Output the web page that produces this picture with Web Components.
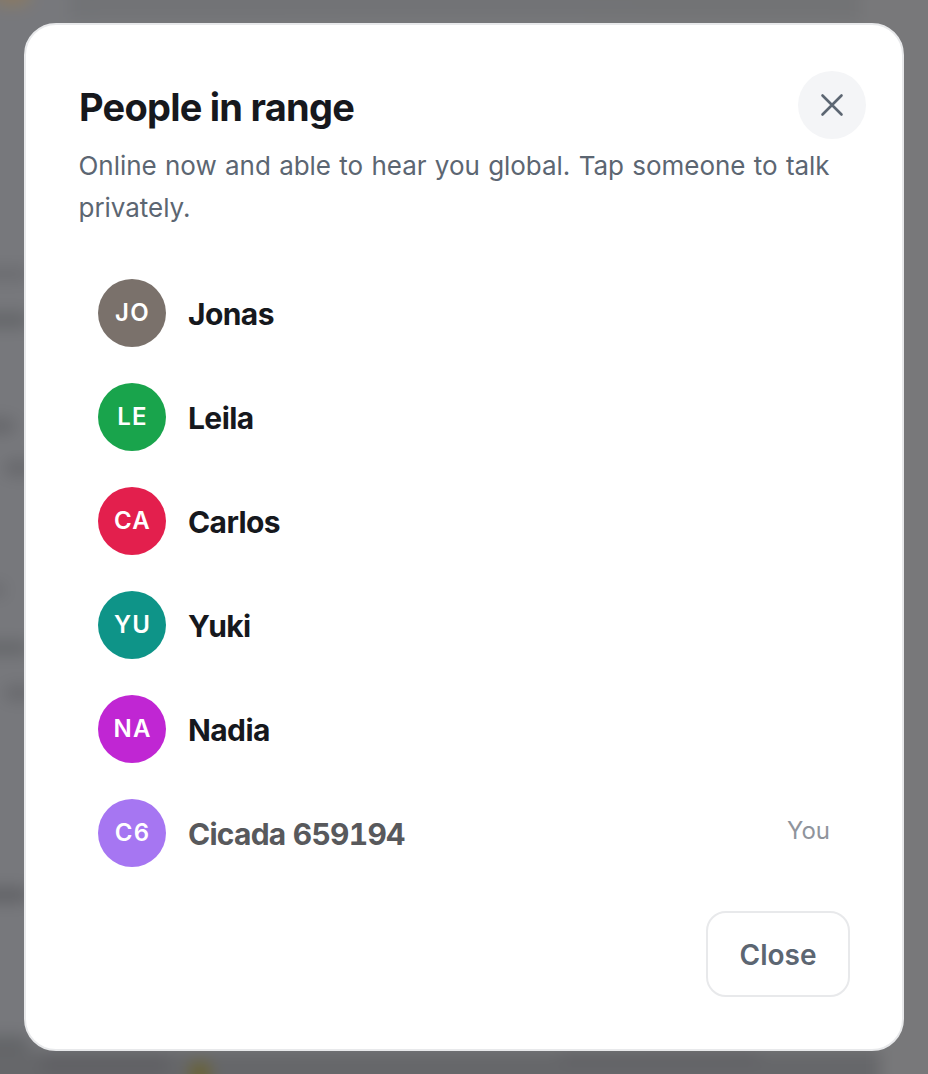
<!DOCTYPE html>
<html><head><meta charset="utf-8"><style>
html,body{margin:0;height:1074px;overflow:hidden;background:#77787b;font-family:Inter,"Liberation Sans",sans-serif}
</style></head><body>
<template id="t-backdrop"><style>
:host{display:block;position:relative;width:928px;height:1074px;overflow:hidden;box-sizing:border-box;padding:23px 24px;background:#77787b}
.blur{position:absolute;inset:-20px;filter:blur(8px);background:linear-gradient(90deg,#77787c,#797a7c 50%,#78787a)}
.b{position:absolute;background:#55565a;border-radius:10px;opacity:.6}
.top{position:absolute;left:14px;top:0;width:36px;height:26px;background:#8d7a5e;border-radius:8px;opacity:.8}
.y{position:absolute;left:210px;top:1082px;width:20px;height:24px;background:#6a6230;border-radius:8px}
.band-t{position:absolute;left:90px;top:0;width:790px;height:40px;background:#6f7073;opacity:.7}
.band-b{position:absolute;left:0;top:1070px;width:900px;height:40px;background:#66676a}
.modal{position:relative}
</style><div class="blur">
<span class="band-t"></span><span class="band-b"></span>
<span class="top"></span><span class="y"></span>
<span class="b" style="left:0;top:288px;width:50px;height:12px;opacity:.4"></span>
<span class="b" style="left:0;top:333px;width:50px;height:14px"></span>
<span class="b" style="left:0;top:438px;width:36px;height:16px;opacity:.5"></span>
<span class="b" style="left:24px;top:480px;width:30px;height:16px;opacity:.5"></span>
<span class="b" style="left:0;top:604px;width:26px;height:12px;opacity:.4"></span>
<span class="b" style="left:0;top:662px;width:50px;height:12px;opacity:.6"></span>
<span class="b" style="left:24px;top:706px;width:30px;height:14px;opacity:.5"></span>
<span class="b" style="left:0;top:908px;width:50px;height:14px;opacity:.7"></span>
<span class="b" style="left:0;top:1056px;width:50px;height:14px;opacity:.6"></span>
<span class="b" style="left:60px;top:1076px;width:130px;height:16px;opacity:.4"></span>
<span class="b" style="left:580px;top:1072px;width:200px;height:10px;opacity:.4"></span>
</div><div class="modal"><slot></slot></div></template>

<template id="t-dialog"><style>
:host{display:block;box-sizing:border-box;width:880px;height:1028px;background:#fff;border:2px solid #e8e9eb;border-radius:32px;padding:52px 53px 0;position:relative}
h2{margin:0;font-size:38px;line-height:60px;font-weight:700;letter-spacing:-.76px;color:#16181d;height:60px}
p{margin:0;width:770px;font-size:26px;line-height:42px;color:#5c6672;letter-spacing:-.04px;word-spacing:1.1px;margin-top:8px;margin-left:-.5px}
.list{margin-top:50px;margin-left:19px;margin-right:19px;display:flex;flex-direction:column;gap:36px}
.foot{position:absolute;right:52px;bottom:52px}
.x{position:absolute;top:46px;right:36px}
</style><h2><slot name="title"></slot></h2><p><slot name="sub"></slot></p>
<div class="x"><slot name="x"></slot></div>
<div class="list"><slot></slot></div>
<div class="foot"><slot name="foot"></slot></div></template>

<template id="t-person"><style>
:host{display:flex;align-items:center;height:68px;gap:22px;color:#16181d}
.av{flex:none;width:68px;height:68px;border-radius:50%;display:flex;align-items:center;justify-content:center;color:#fff;font-size:24px;font-weight:600;letter-spacing:1.2px;padding:0 0 2px 1px;box-sizing:border-box}
.n{flex:1;font-size:30px;font-weight:700;letter-spacing:-.6px;line-height:36px;padding-top:2px}
.t{font-size:24px;color:#8f949c;padding-bottom:5px}
:host([self]){color:#58595c}
:host([self]) .n{font-feature-settings:"tnum";letter-spacing:-.75px}
</style><div class="av"></div><div class="n"><slot></slot></div><div class="t"><slot name="tag"></slot></div></template>

<template id="t-xbtn"><style>
:host{display:flex;width:68px;height:68px;border-radius:50%;background:#f4f5f7;align-items:center;justify-content:center}
svg{width:34px;height:34px;display:block}
</style><svg viewBox="0 0 34 34" fill="none" stroke="#5c6672" stroke-width="2.6" stroke-linecap="round"><path d="M7.5 7.5L26.5 26.5M26.5 7.5L7.5 26.5"/></svg></template>

<template id="t-btn"><style>
:host{display:flex;box-sizing:border-box;width:144px;height:86px;align-items:center;justify-content:center;border:2px solid #e8e9eb;border-radius:20px;background:#fff;color:#5c6672;font-size:28px;font-weight:600;padding-top:2px}
</style><slot></slot></template>

<people-backdrop>
<people-dialog>
<span slot="title">People in range</span>
<span slot="sub">Online now and able to hear you global. Tap someone to talk privately.</span>
<x-button slot="x"></x-button>
<person-row initials="JO" color="#7a716b">Jonas</person-row>
<person-row initials="LE" color="#19a44c">Leila</person-row>
<person-row initials="CA" color="#e31f4d">Carlos</person-row>
<person-row initials="YU" color="#0e9488">Yuki</person-row>
<person-row initials="NA" color="#c026d3">Nadia</person-row>
<person-row initials="C6" color="#a676f2" self>Cicada 659194<span slot="tag">You</span></person-row>
<close-button slot="foot">Close</close-button>
</people-dialog>
</people-backdrop>
<script>
function def(name,id,init){customElements.define(name,class extends HTMLElement{constructor(){super();this.attachShadow({mode:'open'}).appendChild(document.getElementById(id).content.cloneNode(true));}connectedCallback(){if(init)init(this);}});}
def('people-backdrop','t-backdrop');
def('people-dialog','t-dialog');
def('x-button','t-xbtn');
def('close-button','t-btn');
def('person-row','t-person',el=>{const a=el.shadowRoot.querySelector('.av');a.textContent=el.getAttribute('initials');a.style.background=el.getAttribute('color');});
</script>
</body></html>
